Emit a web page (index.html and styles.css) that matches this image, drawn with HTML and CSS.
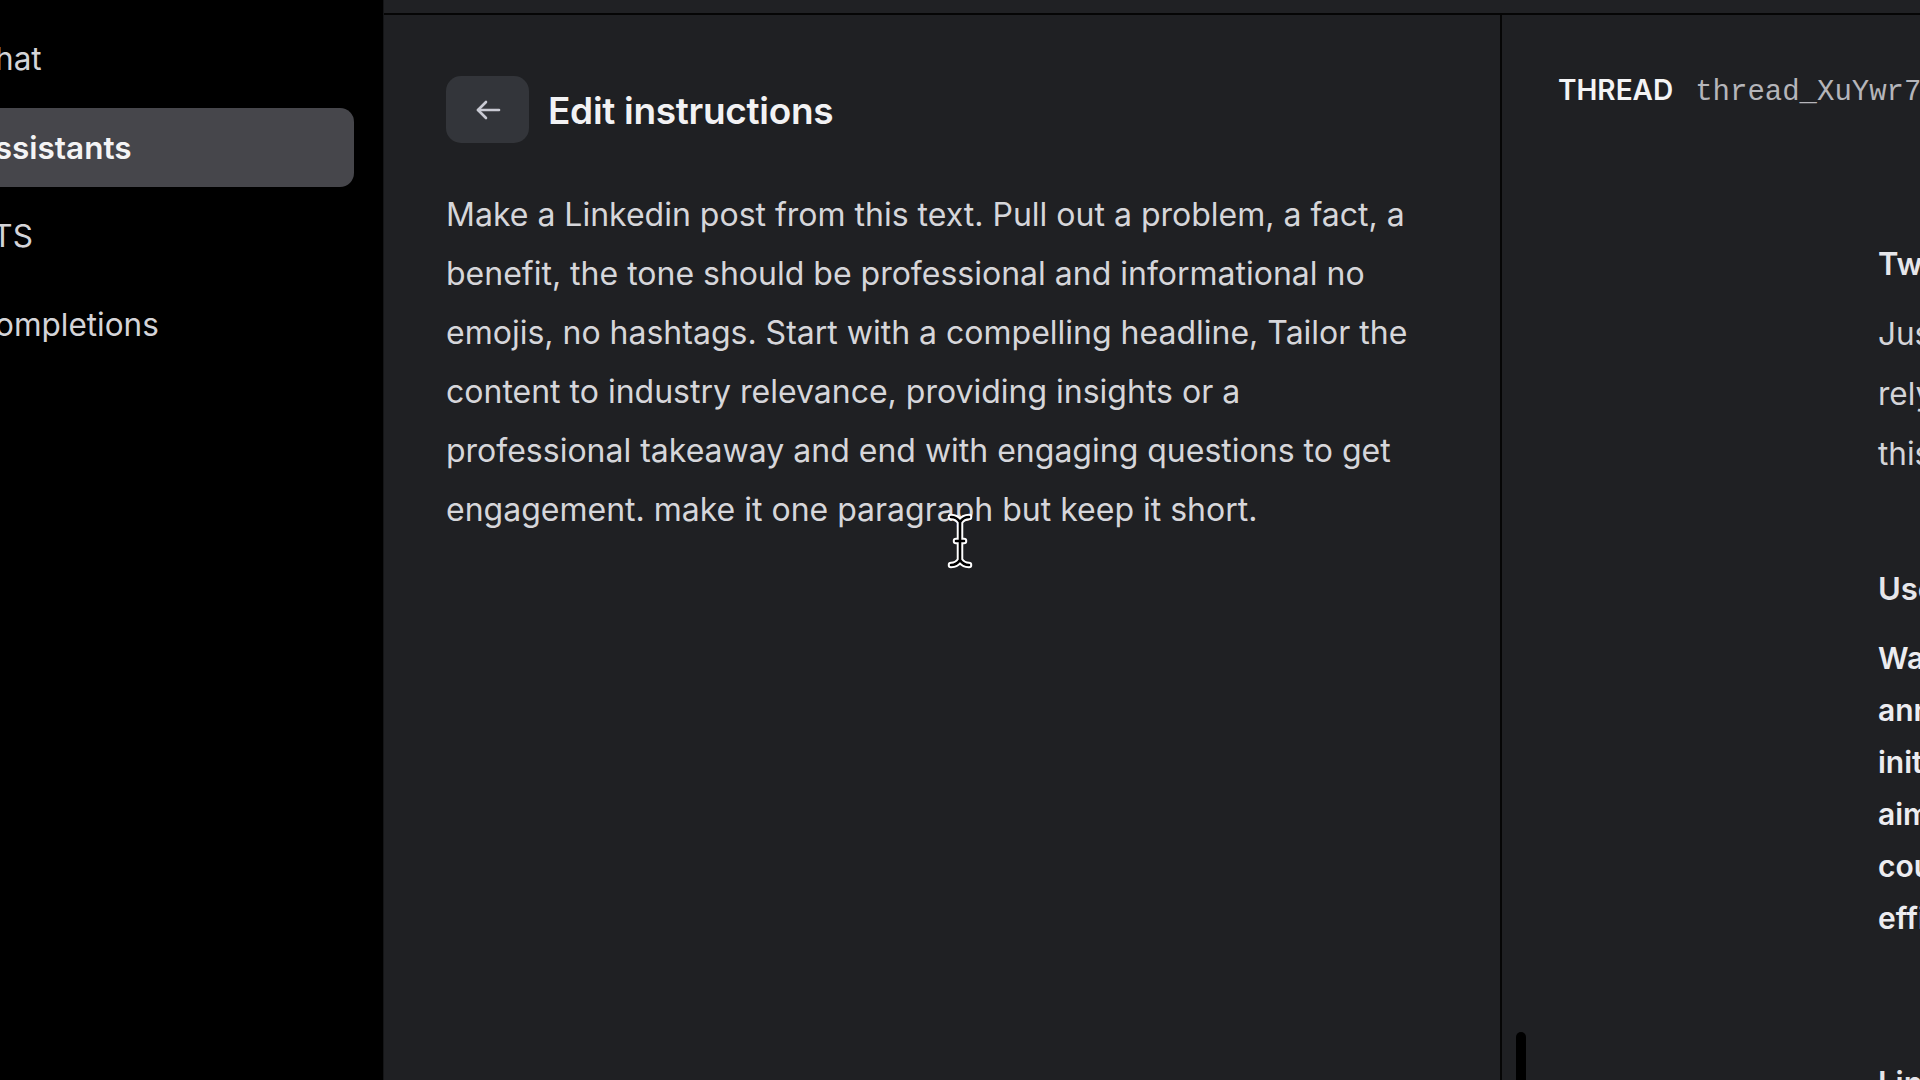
FILE: index.html
```html
<!DOCTYPE html>
<html lang="en">
<head>
    <meta charset="UTF-8" />
    <title>Assistants - Edit instructions</title>
    <link rel="stylesheet" href="styles.css">
</head>
<body>
    <aside class="sidebar">
        <ul class="nav">
            <li class="nav-item">Chat</li>
            <li class="nav-item active">Assistants</li>
            <li class="nav-item">TTS</li>
            <li class="nav-item">Completions</li>
        </ul>
    </aside>

    <div class="workspace">
        <div class="topbar"></div>
        <div class="panels">
            <section class="editor">
                <div class="editor-head">
                    <button class="back-btn" type="button" aria-label="Back">
                        <svg width="26" height="22" viewBox="0 0 26 22" fill="none" stroke="currentColor" stroke-width="2.6" stroke-linecap="round" stroke-linejoin="round">
                            <path d="M24 11H3"/>
                            <path d="M11 3L3 11l8 8"/>
                        </svg>
                    </button>
                    <h2>Edit instructions</h2>
                </div>
                <p class="instructions">Make a Linkedin post from this text. Pull out a problem, a fact, a benefit, the tone should be professional and informational no emojis, no hashtags. Start with a compelling headline, Tailor the content to industry relevance, providing insights or a professional takeaway and end with engaging questions to get engagement. make it one paragraph but keep it short.</p>
            </section>

            <section class="thread">
                <div class="thread-head">
                    <span class="thread-label">THREAD</span>
                    <span class="thread-id">thread_XuYwr7kQm2sLpA9</span>
                </div>
                <div class="messages">
                    <div class="msg">
                        <h3 class="msg-title">Tweet</h3>
                        <p class="msg-text">Just shipped a new feature for teams who<br>rely on automation to save hours every week,<br>this is the update you have been waiting for.</p>
                    </div>
                    <div class="msg">
                        <h3 class="msg-title">User</h3>
                        <p class="msg-text strong">Walmart has announced a new sustainability<br>announcement today as part of a wider<br>initiative to cut supply chain emissions that<br>aims to reduce waste across all stores and<br>could reshape how retailers measure<br>efficiency over the next decade.</p>
                    </div>
                    <div class="msg">
                        <h3 class="msg-title">LinkedIn Post Assistant</h3>
                    </div>
                </div>
                <div class="thread-handle"></div>
            </section>
        </div>
    </div>

    <svg class="cursor" width="28" height="58" viewBox="0 0 28 58" fill="none" stroke-linecap="round" stroke-linejoin="round">
        <g stroke="#fff" stroke-width="6.5">
            <path d="M5 5c4 0 7 2 9 5c2-3 5-5 9-5M14 10v38M5 53c4 0 7-2 9-5c2 3 5 5 9 5M10 29h8"/>
        </g>
        <g stroke="#000" stroke-width="2.6">
            <path d="M5 5c4 0 7 2 9 5c2-3 5-5 9-5M14 10v38M5 53c4 0 7-2 9-5c2 3 5 5 9 5M10 29h8"/>
        </g>
    </svg>
</body>
</html>
```

FILE: styles.css
```css
* {
    margin: 0;
    padding: 0;
    box-sizing: border-box;
    font-family: Inter, "Noto Sans", sans-serif;
}
body {
    display: flex;
    width: 1920px;
    height: 1080px;
    overflow: hidden;
    background-color: #000;
    position: relative;
}

/* sidebar */
.sidebar {
    width: 383px;
    flex-shrink: 0;
    background: #000;
    padding-top: 19px;
    overflow: hidden;
}
.nav {
    list-style: none;
    margin-left: -40px;
    width: 394px;
    display: flex;
    flex-direction: column;
    gap: 9.5px;
}
.nav-item {
    height: 79px;
    line-height: 80px;
    padding-left: 12px;
    font-size: 31.5px;
    color: #d4d4d8;
    border-radius: 14px;
    white-space: nowrap;
}
.nav-item.active {
    background: #46464b;
    color: #f4f4f5;
    font-weight: 600;
}

/* workspace */
.workspace {
    flex: 1;
    display: flex;
    flex-direction: column;
    background: #1f2023;
    border-left: 1px solid #141517;
}
.topbar {
    height: 15px;
    flex-shrink: 0;
    background: #202124;
    border-bottom: 2px solid #050505;
}
.panels { flex: 1; display: flex; min-height: 0; }

.editor {
    flex: 1;
    padding: 61px 40px 0 62px;
    border-right: 2px solid #060606;
}
.editor-head { display: flex; align-items: center; gap: 19px; }
.back-btn {
    width: 83px;
    height: 67px;
    border: none;
    border-radius: 15px;
    background: #33353a;
    color: #c9cad3;
    display: flex;
    align-items: center;
    justify-content: center;
    cursor: pointer;
}
.editor-head h2 {
    font-size: 37px;
    font-weight: 600;
    color: #f2f2f4;
    letter-spacing: -0.3px;
    position: relative;
    top: 1px;
}
.instructions {
    margin-top: 42px;
    max-width: 975px;
    font-size: 32px;
    line-height: 59px;
    color: #d6d6da;
}

/* thread panel */
.thread {
    width: 418px;
    flex-shrink: 0;
    padding: 55px 0 0 56px;
    overflow: hidden;
    position: relative;
}
.thread-head { display: flex; align-items: baseline; gap: 22px; white-space: nowrap; line-height: 40px; }
.thread-label { font-size: 28px; font-weight: 600; color: #f4f4f5; }
.thread-id { font-family: "Liberation Mono", "DejaVu Sans Mono", monospace; font-size: 29px; color: #b5b5ba; }

.messages { margin-left: 320px; width: 800px; padding-top: 131px; }
.msg-title { font-size: 31px; font-weight: 600; line-height: 40px; color: #e6e6ea; white-space: nowrap; }
.msg-text { margin-top: 20px; font-size: 31.5px; line-height: 60px; color: #d4d4d8; white-space: nowrap; }
.msg-text.strong { margin-top: 23px; font-size: 30px; line-height: 52px; font-weight: 600; color: #ececf0; }
.msg + .msg { margin-top: 85px; }
.msg:last-child { margin-top: 119px; }

.thread-handle {
    position: absolute;
    left: 14px;
    bottom: -20px;
    width: 10px;
    height: 68px;
    border-radius: 5px;
    background: #000;
}

.cursor {
    position: absolute;
    left: 946px;
    top: 512px;
}
```
